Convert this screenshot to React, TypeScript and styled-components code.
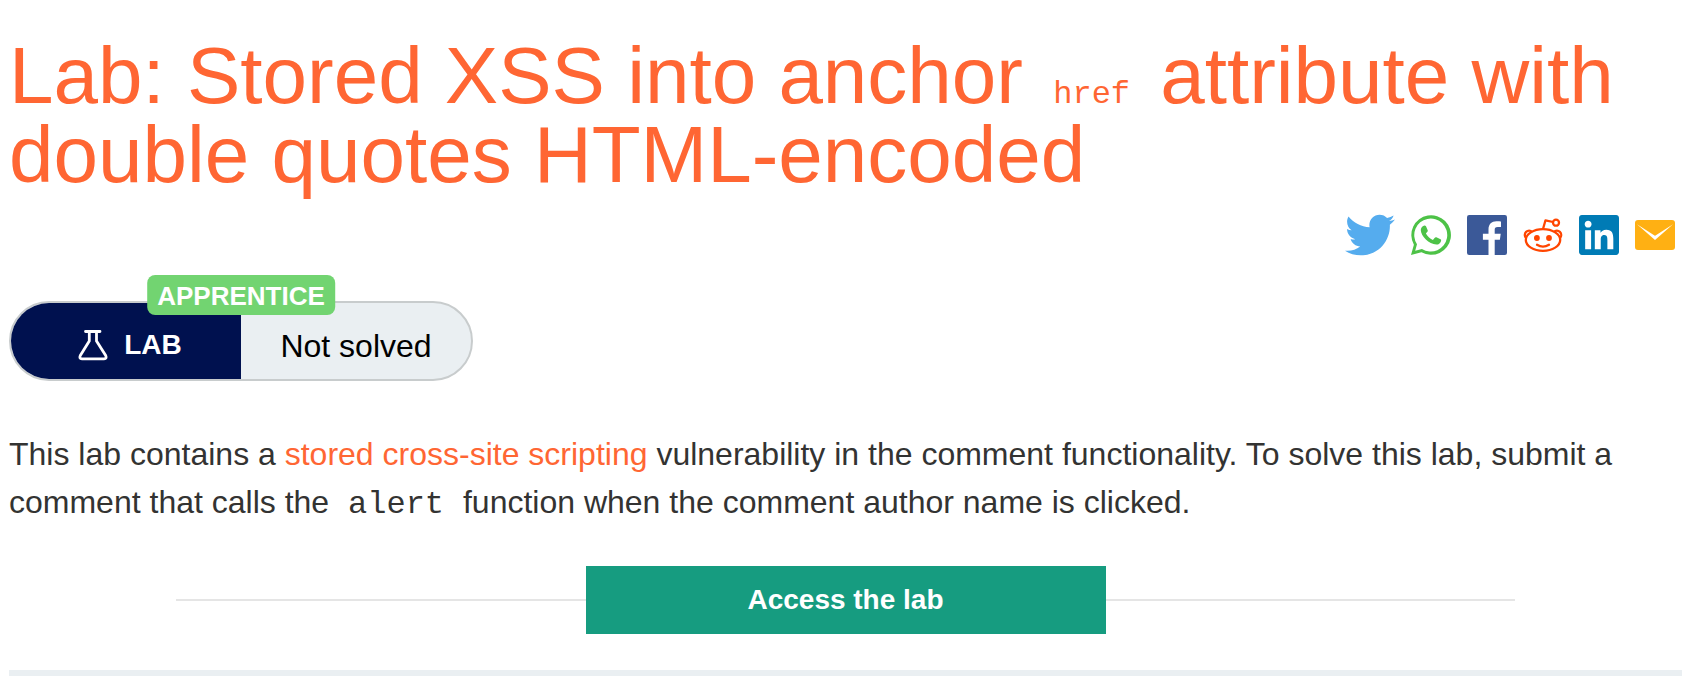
import React from "react";
import styled, { createGlobalStyle } from "styled-components";
import { FaTwitter, FaLinkedin } from "react-icons/fa";

const GlobalStyle = createGlobalStyle`
  * { box-sizing: border-box; }
  body {
    margin: 0;
    background: #fff;
    color: #333332;
    font-family: "Liberation Sans", Arial, sans-serif;
    font-size: 32px;
    line-height: 48px;
  }
`;

const Page = styled.main`
  padding: 36px 0 0 9px;
`;

const Title = styled.h1`
  margin: 0;
  color: #ff6633;
  font-size: 80px;
  font-weight: 400;
  line-height: 79px;
`;

const Code = styled.code<{ $gap: number }>`
  padding: 0 ${(p) => p.$gap}px;
  font-family: "Liberation Mono", "Courier New", monospace;
  font-size: 32px;
  line-height: 1;
`;

const ShareBar = styled.nav`
  display: flex;
  justify-content: flex-end;
  align-items: center;
  gap: 16px;
  height: 40px;
  margin-top: 21px;
  padding-right: 7px;
`;

const ShareLink = styled.a<{ $color: string }>`
  display: flex;
  color: ${(p) => p.$color};
`;

const Status = styled.section`
  position: relative;
  display: flex;
  width: 464px;
  height: 80px;
  margin-top: 46px;
  border: 2px solid #c8cccd;
  border-radius: 40px;
  background: #eaeff2;
`;

const Level = styled.span`
  position: absolute;
  top: -28px;
  left: 50%;
  transform: translateX(-50%);
  padding: 2px 10px 0;
  border-radius: 8px;
  background: #72d471;
  color: #fff;
  font-size: 26px;
  font-weight: 700;
  line-height: 38px;
`;

const StatusHalf = styled.div<{ $dark?: boolean }>`
  width: 50%;
  display: flex;
  align-items: center;
  justify-content: center;
  gap: 16px;
  padding: ${(p) => (p.$dark ? "8px 0 0 8px" : "10px 0 0")};
  border-radius: ${(p) => (p.$dark ? "38px 0 0 38px" : "0 38px 38px 0")};
  background: ${(p) => (p.$dark ? "#00114f" : "transparent")};
  color: ${(p) => (p.$dark ? "#fff" : "#000")};
  font-size: ${(p) => (p.$dark ? 28 : 32)}px;
  font-weight: ${(p) => (p.$dark ? 700 : 400)};
`;

const Description = styled.p`
  margin: 49px 0 0;
`;

const TextLink = styled.a`
  color: #ff6633;
  text-decoration: none;
`;

const Launch = styled.div`
  display: flex;
  align-items: center;
  margin: 40px 10% 0;

  &::before,
  &::after {
    content: "";
    flex: 1;
    height: 2px;
    background: #e5e5e5;
  }
`;

const LaunchButton = styled.button`
  width: 520px;
  height: 68px;
  padding: 0;
  border: 0;
  background: #169c80;
  color: #fff;
  font-family: inherit;
  font-size: 28px;
  font-weight: 700;
`;

const Divider = styled.hr`
  height: 6px;
  margin: 36px 0 0;
  border: 0;
  background: #eaeff2;
`;

const WhatsAppIcon = () => (
  <svg width="40" height="40" viewBox="0 0 40 40" fill="currentColor" aria-hidden="true">
    <path
      fillRule="evenodd"
      d="M0 40 2.900 29.800A19.800 19.800 0 1 1 10.400 37.300ZM4.200 35.800 10.900 34A16.500 16.500 0 1 0 6 29.200Z"
    />
    <path d="M12.200 11.100c.8-.8 2.300-.7 2.800.2l1.700 3.900c.3.700-.1 1.300-.6 1.900l-1.200 1.500c1.700 3.100 3.700 4.900 7 6.300l1.900-2.200c.4-.6 1-.7 1.600-.4l4.100 2c.6.300.7.700.6 1.400-.3 2.400-2.400 3.900-4.700 3.900-7.500-.4-15.300-8.200-15.600-14.300 0-1.700.9-3.200 2.400-4.200Z" />
  </svg>
);

const FacebookIcon = () => (
  <svg width="40" height="40" viewBox="0 0 40 40" aria-hidden="true">
    <rect width="40" height="40" rx="2.200" fill="currentColor" />
    <path
      fill="#fff"
      d="M21.500 40V24.700h-5.600v-6h5.600v-4.400c0-5.200 3.200-8.100 7.900-8.100 2.200 0 4.100.2 4.600.3v5.400h-3.200c-2.600 0-3.100 1.200-3.100 3v3.800h6l-.8 6h-5.200V40Z"
    />
  </svg>
);

const RedditIcon = () => (
  <svg width="40" height="40" viewBox="0 0 40 40" fill="none" stroke="currentColor" strokeWidth="2.300" aria-hidden="true">
    <ellipse cx="20" cy="25" rx="17.200" ry="10.800" />
    <path d="M20 14 22.500 5.300 30 7" strokeLinejoin="round" />
    <circle cx="33" cy="7.700" r="3" />
    <path d="M3 23A4.300 4.300 0 1 1 9.200 17M30.800 17A4.300 4.300 0 1 1 37 23" />
    <path d="M14 29.800q6 3.700 12 0" strokeLinecap="round" />
    <g fill="currentColor" stroke="none">
      <circle cx="13.900" cy="23" r="2.900" />
      <circle cx="26" cy="23" r="2.900" />
    </g>
  </svg>
);

const MailIcon = () => (
  <svg width="40" height="30" viewBox="0 0 40 30" aria-hidden="true">
    <rect width="40" height="30" rx="3" fill="currentColor" />
    <path d="M2 4.300 20 20 38 4.300 20.500 15.500q-.5.300-1 0Z" fill="#fff" />
  </svg>
);

const FlaskIcon = () => (
  <svg
    width="30"
    height="32"
    viewBox="0 0 30 32"
    fill="none"
    stroke="currentColor"
    strokeWidth="2.800"
    strokeLinecap="round"
    strokeLinejoin="round"
    aria-hidden="true"
  >
    <path d="M7.500 2.500h14.500M11.300 3v9L2.300 26.500q-1.400 3.300 1.600 3.300h22.200q3 0 1.600-3.300L18.500 12V3" />
  </svg>
);

export default function App() {
  return (
    <>
      <GlobalStyle />
      <Page>
        <Title>
          Lab: Stored XSS into anchor <Code $gap={8}>href</Code> attribute with double quotes
          HTML-encoded
        </Title>
        <ShareBar aria-label="Share">
          <ShareLink href="#twitter" aria-label="Twitter" $color="#55acee">
            <FaTwitter size={50} />
          </ShareLink>
          <ShareLink href="#whatsapp" aria-label="WhatsApp" $color="#4dc247">
            <WhatsAppIcon />
          </ShareLink>
          <ShareLink href="#facebook" aria-label="Facebook" $color="#3b5998">
            <FacebookIcon />
          </ShareLink>
          <ShareLink href="#reddit" aria-label="Reddit" $color="#ff4500">
            <RedditIcon />
          </ShareLink>
          <ShareLink href="#linkedin" aria-label="LinkedIn" $color="#007bb5">
            <FaLinkedin size={40} viewBox="0 32 448 448" />
          </ShareLink>
          <ShareLink href="#email" aria-label="Email" $color="#ffb013">
            <MailIcon />
          </ShareLink>
        </ShareBar>
        <Status>
          <StatusHalf $dark>
            <FlaskIcon />
            LAB
          </StatusHalf>
          <StatusHalf>Not solved</StatusHalf>
          <Level>APPRENTICE</Level>
        </Status>
        <Description>
          This lab contains a <TextLink href="#stored">stored cross-site scripting</TextLink>{" "}
          vulnerability in the comment functionality. To solve this lab, submit a comment that calls
          the <Code $gap={10}>alert</Code> function when the comment author name is clicked.
        </Description>
        <Launch>
          <LaunchButton type="button">Access the lab</LaunchButton>
        </Launch>
        <Divider />
      </Page>
    </>
  );
}
